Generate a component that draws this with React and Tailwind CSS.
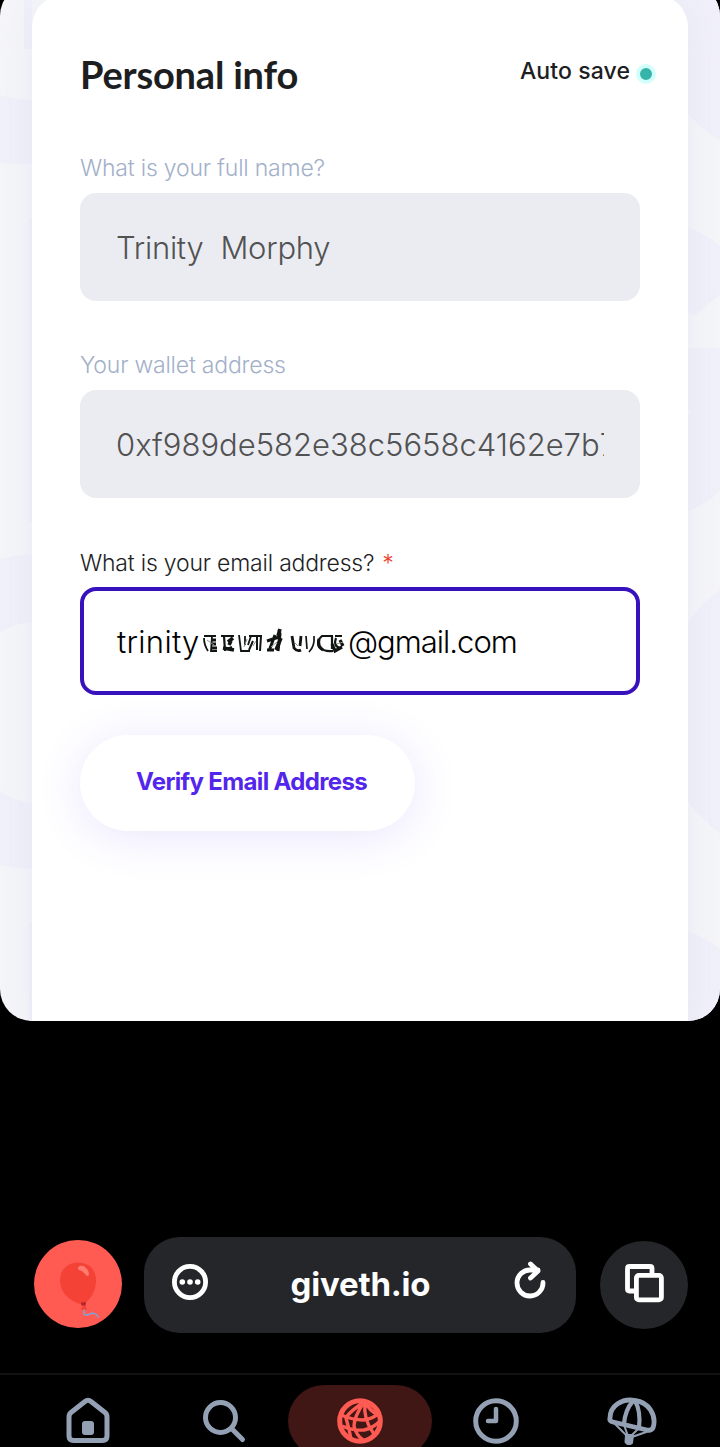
import React from "react";

function Backdrop() {
  return (
    <svg className="absolute inset-0 h-full w-full" viewBox="0 0 720 1037" fill="#f1f0fa">
      <path d="M24 0H32V65H24Z" />
      <path d="M0 111Q16 116 32 116V180H14Q5 180 0 178Z" />
      <path d="M29 234H32V538H29Z" />
      <path d="M0 575Q16 571 32 570V638Q14 640 0 648Z" />
      <path d="M0 807Q12 816 32 819V885Q14 884 0 881Z" />
      <path d="M29 938H32V1037H29Z" />
      <path d="M660 0H720V156Q704 148 688 130H660Z" />
      <path d="M688 243Q706 250 720 262V311Q706 321 694 332L688 328Z" />
      <path d="M688 364H720V507Q706 520 688 527Z" />
      <path d="M720 606Q702 618 688 639V818Q703 836 720 850Z" />
      <path d="M688 947Q706 954 720 965V1037H688Z" />
      <path d="M688 426L691 426L688 432Z" fill="#f6f6f9" />
    </svg>
  );
}

function Field({ label, labelClass, boxClass, children }) {
  return (
    <div className="flex flex-col">
      <div className={"flex h-9 items-center text-[23px] leading-9 font-light tracking-[-0.2px] whitespace-pre " + labelClass}>{label}</div>
      <div className={"mt-[7px] flex h-[108px] items-center rounded-2xl pt-px " + boxClass}>{children}</div>
    </div>
  );
}

function Scribble() {
  return (
    <svg className="mb-px h-10 w-[150px] shrink-0 blur-[0.5px]" viewBox="0 0 150 40" fill="none" stroke="#101512" strokeWidth="3" strokeLinecap="butt">
      <path d="M5 15H17M5 17Q5 24 9 30M13 15L12 30H18" strokeWidth="1.8" />
      <path d="M12 19H17M13 23H17M13 27H18" />
      <path d="M22 15H35M25 15L26 30M28 28L33 26" strokeWidth="2.2" />
      <path d="M24 27L35 29M29 21L34 17M30 24L32 20" strokeWidth="3.6" />
      <path d="M40 14L42 30H51M46 15V24M52 15L49 24" strokeWidth="1.8" />
      <path d="M50 15H62L61 30M58 16V29M50 29L54 20" strokeWidth="2" />
      <path d="M68 20L80 16M80 9L81 13L79 30M76 14L70 30M68 29H75" />
      <path d="M81 8L79 15M82 17L77 29" strokeWidth="3.6" />
      <path d="M93 15L95 27Q98 31 102 29M102 15L101 25" strokeWidth="2.8" />
      <path d="M107 15L108 28M115 15Q116 25 110 31" strokeWidth="1.7" />
      <path d="M134 15H123Q117 20 120 26Q125 31 134 30M133 15V28M136 15H143M137 17Q134 25 141 27" strokeWidth="2.2" />
      <path d="M120 18Q118 25 124 29M133 23L136 30L143 26M141 19L144 25" strokeWidth="3.2" />
      <path d="M8 19L15 24M45 26L48 18M54 25L57 20M72 26L78 21M96 22L99 25M138 23L144 21" stroke="#8d9691" strokeWidth="1" />
    </svg>
  );
}

function Balloon() {
  return (
    <svg className="h-[88px] w-[88px]" viewBox="0 0 88 88" fill="none">
      <path d="M44 22.500C33 22.500 26 30 26 40.500C26 53.500 37 62 49 65C57 59 62 51 62 40.500C62 29.500 55 22.500 44 22.500Z" fill="#f44336" />
      <path d="M49 65L47 70H53L51 64Z" fill="#f44336" />
      <path d="M47 63Q50 61.500 52 62.500L51.500 65.500H47.500Z" fill="#b3262b" />
      <path d="M46 26C50 24 56.500 31 54.500 35.500C52.500 38 50.500 31.500 46.500 30.500C43.500 30 43 27 46 26Z" fill="#ff7b71" />
      <path d="M50 70C49 76 52 75.500 56 74C60 72 62 74 64.500 77" stroke="#79a7df" strokeWidth="1.4" strokeLinecap="round" />
    </svg>
  );
}

function NavItem({ active, children }) {
  return (
    <div className={"flex h-[72px] w-[144px] shrink-0 items-center justify-center rounded-full " + (active ? "bg-[#401715] text-[#ff5b52]" : "text-[#94a0b4]")}>
      {children}
    </div>
  );
}

export default function App() {
  return (
    <div className="flex h-[1447px] w-[720px] flex-col overflow-hidden bg-black font-['Inter','Noto_Sans',sans-serif]">
      <main className="relative -mt-4 h-[1037px] shrink-0 overflow-hidden rounded-[32px] bg-[#f6f6f9]">
        <Backdrop />
        <section className="relative mx-8 mt-[11px] flex h-[1040px] flex-col rounded-t-[32px] bg-white pt-[58px] shadow-[0_3px_40px_rgba(212,218,238,0.4)]">
          <header className="flex h-[46px] items-center justify-between pr-8 pl-12">
            <h1 className="-mt-1 font-['Lato',sans-serif] text-[38px] font-bold tracking-[-0.2px] text-[#1d1e1f]">Personal info</h1>
            <div className="-mt-2 flex items-center gap-[6px] text-[23px] font-medium text-[#1d1e1f]">
              <span className="-mt-[2px] tracking-[0.1px]">Auto save</span>
              <span className="mt-1 h-5 w-5 rounded-full border-4 border-[#d2fffb] bg-[#37b4a9]" />
            </div>
          </header>

          <div className="mt-[51px] flex flex-col gap-[46px] px-12">
            <Field label="What is your full name?" labelClass="text-[#a3b0c9]" boxClass="bg-[#ebecf2] px-9">
              <span className="overflow-hidden text-[31px] leading-[48px] font-light tracking-[-0.25px] whitespace-pre text-[#525252]">Trinity  Morphy</span>
            </Field>
            <Field label="Your wallet address" labelClass="text-[#a3b0c9]" boxClass="bg-[#ebecf2] px-9">
              <span className="overflow-hidden text-[31px] leading-[48px] font-light whitespace-pre text-[#525252]">0xf989de582e38c5658c4162e7b7</span>
            </Field>
            <Field
              label={<><span>What is your email address?</span><span className="ml-2 text-[#e6492d]">*</span></>}
              labelClass="pt-[2px] text-[#1d1e1f]"
              boxClass="border-4 border-[#3811bf] bg-white pr-8 pl-[33px]"
            >
              <span className="w-[82px] shrink-0 text-[31px] leading-[48px] font-light tracking-[0.3px] text-black">trinity</span>
              <Scribble />
              <span className="-ml-px text-[31px] leading-[48px] font-light tracking-[-1px] text-black">@gmail.com</span>
            </Field>
          </div>

          <button className="mt-10 ml-12 flex h-24 w-[335px] items-center justify-center rounded-full bg-white pb-[3px] pl-2 text-2xl font-bold tracking-[-0.65px] text-[#5326ec] shadow-[0_6px_48px_rgba(83,38,236,0.12)]">
            <span>Verify Email Address</span>
          </button>
        </section>
      </main>

      <div className="mt-[216px] flex h-24 shrink-0 items-center pr-8 pl-[34px]">
        <div className="-mt-[2px] h-[88px] w-[88px] overflow-hidden rounded-full bg-[#ff5b52]"><Balloon /></div>
        <div className="ml-[22px] flex h-24 w-[432px] items-center justify-between rounded-[36px] bg-[#25262a] px-7 pb-[6px] text-white">
          <svg className="h-9 w-9" viewBox="0 0 36 36" fill="currentColor">
            <circle cx="18" cy="18" r="15.6" fill="none" stroke="currentColor" strokeWidth="4.8" />
            <circle cx="10.300" cy="18" r="2.800" /><circle cx="18" cy="18" r="2.800" /><circle cx="25.700" cy="18" r="2.800" />
          </svg>
          <span className="mt-[6px] ml-px text-[33px] font-bold tracking-[-0.2px]">giveth.io</span>
          <svg className="-mt-1 h-10 w-9" viewBox="-1 0 36 40" fill="none" stroke="currentColor" strokeWidth="4.8" strokeLinecap="round" strokeLinejoin="round">
            <path d="M30 22.500A13 13 0 1 1 17.500 10H25M17.500 4L25 11L17.500 18" />
          </svg>
        </div>
        <div className="ml-6 flex h-[88px] w-[88px] items-center justify-center rounded-full bg-[#25262a] text-white">
          <svg className="-mt-1 h-10 w-10" viewBox="0 0 40 40" fill="none" stroke="currentColor" strokeWidth="4.8" strokeLinejoin="round">
            <path d="M28 10V5.500Q28 3.500 26 3.500H5.500Q3.500 3.500 3.500 5.500V26Q3.500 28 5.500 28H11" />
            <rect x="12.400" y="12.400" width="25" height="24.500" rx="2.500" />
          </svg>
        </div>
      </div>

      <nav className="mt-10 flex h-[74px] shrink-0 items-start justify-center border-t-2 border-[#111214] pt-[10px]">
        <div className="flex w-[720px] shrink-0 items-start justify-center">
          <div className="-mr-2"><NavItem>
            <svg className="h-12 w-12" viewBox="0 0 48 48" fill="none" stroke="currentColor" strokeWidth="5" strokeLinejoin="round">
              <path d="M21 4.500Q24 2 27 4.500L41 15.500Q43 17 43 20V39Q43 43.500 38.500 43.500H9.500Q5 43.500 5 39V20Q5 17 7 15.500Z" />
              <rect x="18" y="24" width="12" height="14" rx="3" fill="currentColor" stroke="none" />
            </svg>
          </NavItem></div>
          <div className="-mr-2"><NavItem>
            <svg className="h-12 w-12" viewBox="0 0 48 48" fill="none" stroke="currentColor" strokeWidth="5" strokeLinecap="round">
              <circle cx="20.500" cy="20.500" r="15" /><path d="M31.500 31.500L42.500 42.500" />
            </svg>
          </NavItem></div>
          <NavItem active>
            <svg className="h-12 w-12" viewBox="0 0 48 48" fill="#401715" stroke="currentColor" strokeWidth="3.400">
              <circle cx="24" cy="24" r="20.300" strokeWidth="5" />
              <path d="M28 5Q12 16 10 21Q13 31 15 42M28 5Q18 20 18 29Q20 38 27 43M29 5Q27 23 38 37M30 5Q32 13 44 19M5 18Q17 23 27 23Q37 22 43 16M6 29Q18 34 28 33Q37 31 43 25" fill="none" />
            </svg>
          </NavItem>
          <div className="-ml-2"><NavItem>
            <svg className="h-12 w-12" viewBox="0 0 48 48" fill="none" stroke="currentColor" strokeWidth="5">
              <circle cx="24" cy="24" r="20.300" /><path d="M24 12V24H16" strokeWidth="4.500" strokeLinecap="round" strokeLinejoin="round" />
            </svg>
          </NavItem></div>
          <div className="-ml-2"><NavItem>
            <svg className="h-12 w-[52px]" viewBox="0 0 52 48" fill="none" stroke="currentColor" strokeWidth="4.800" strokeLinejoin="round" strokeLinecap="round">
              <path d="M4 21C4 9 16 1 29 3.500C43 5 51 19 47 31Q45 34 41 33L7 25Q3 24 4 21Z" />
              <path d="M27 4Q19 13 18 27M29 4Q35 14 33 31" strokeWidth="4.200" />
              <path d="M8 26L21 39M18 28L22 39M33 31L25 39M43 34L26 40" strokeWidth="2" />
              <path d="M20 38H27L26 46Q22 49 19.500 45Z" fill="currentColor" strokeWidth="2" />
            </svg>
          </NavItem></div>
        </div>
      </nav>
    </div>
  );
}
